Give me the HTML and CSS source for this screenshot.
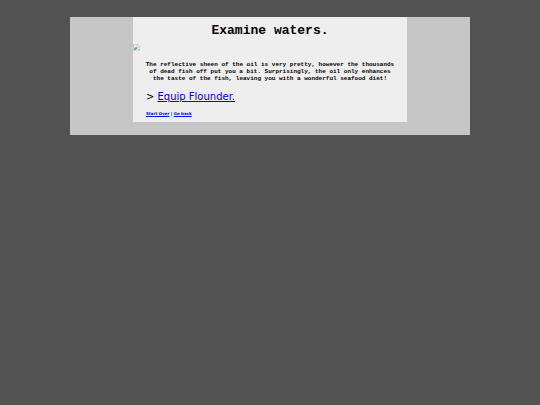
FILE: index.html
```html
<!DOCTYPE html>
<html lang="en">
<head>
    <meta charset="UTF-8">
    <meta name="viewport" content="width=device-width, initial-scale=1.0">
    <title>Examine waters.</title>
    <link rel="stylesheet" href="styles.css">
</head>
<body>
    <div class="container">
        <div class="story">
            <h1>Examine waters.</h1>
            <svg class="scene" viewBox="0 0 14 14" role="img" aria-label="Scene">
                <path d="M1 1h9l3 3v9H1z" fill="#d3e0f2" stroke="#b5b9b5"/>
                <path d="M9 1v4h4" fill="#ffffff" stroke="#b5b9b5"/>
                <path d="M3 5q2-3 4 0z" fill="#ffffff"/>
                <path d="M2 12V9l4-3 3 2-4 4z" fill="#6fae6a"/>
                <path d="M6 13l7-6v2l-4 4z" fill="#eeeeee"/>
                <path d="M10 12l2-2v2z" fill="#6fae6a"/>
            </svg>
            <p class="text">The reflective sheen of the oil is very pretty, however the thousands of dead fish off put you a bit. Surprisingly, the oil only enhances the taste of the fish, leaving you with a wonderful seafood diet!</p>
            <p class="choice">&gt; <a href="#equip">Equip Flounder.</a></p>
            <p class="nav"><a href="#start">Start Over</a> | <a href="#back">Go back</a></p>
        </div>
    </div>
</body>
</html>
```

FILE: styles.css
```css
* {
    box-sizing: border-box;
    margin: 0;
    padding: 0;
}

body {
    background: #535353;
    color: #000000;
    font-family: "DejaVu Sans", Verdana, sans-serif;
    padding-top: 17px;
}

.container {
    width: 74.2%;
    margin: 0 auto;
    padding-bottom: 13px;
    background: #c6c6c6;
}

.story {
    width: 68.4%;
    margin: 0 auto;
    padding-bottom: 5px;
    background: #eeeeee;
}

h1 {
    padding-top: 6px;
    font-family: "Courier New", "Liberation Mono", monospace;
    font-size: 13px;
    line-height: 15px;
    text-align: center;
}

.scene {
    display: block;
    width: 7px;
    height: 7px;
    margin-top: 6px;
}

.text {
    padding: 10px 12px 0;
    font-family: "Courier New", "Liberation Mono", monospace;
    font-size: 6px;
    font-weight: bold;
    line-height: 7px;
    text-align: center;
}

.choice {
    padding: 9px 13px 0;
    font-size: 10px;
    line-height: 12px;
}

.nav {
    padding: 7px 13px 0;
    font-size: 4px;
    font-weight: bold;
    line-height: 7px;
}

a {
    color: #0000ee;
}
```
